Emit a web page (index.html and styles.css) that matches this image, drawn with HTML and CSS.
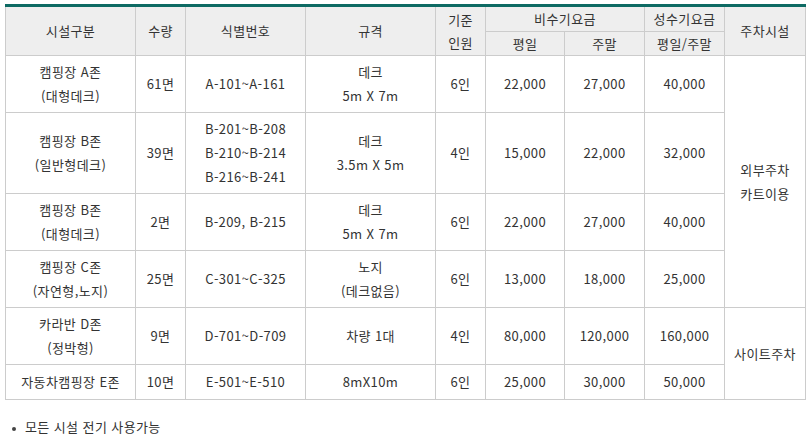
FILE: index.html
```html
<!DOCTYPE html>
<html lang="ko">
<head>
<meta charset="utf-8">
<link rel="stylesheet" href="styles.css">
</head>
<body>
<div class="wrap">
  <table class="fee">
    <colgroup>
      <col class="c1"><col class="c2"><col class="c3"><col class="c4"><col class="c5"><col class="c6"><col class="c7"><col class="c8"><col class="c9">
    </colgroup>
    <thead>
      <tr>
        <th rowspan="2">시설구분</th>
        <th rowspan="2">수량</th>
        <th rowspan="2">식별번호</th>
        <th rowspan="2">규격</th>
        <th rowspan="2">기준<br>인원</th>
        <th colspan="2">비수기요금</th>
        <th>성수기요금</th>
        <th rowspan="2">주차시설</th>
      </tr>
      <tr>
        <th>평일</th>
        <th>주말</th>
        <th>평일/주말</th>
      </tr>
    </thead>
    <tbody>
      <tr>
        <td>캠핑장 A존<br>(대형데크)</td>
        <td>61면</td>
        <td>A-101~A-161</td>
        <td>데크<br>5m X 7m</td>
        <td>6인</td>
        <td>22,000</td>
        <td>27,000</td>
        <td>40,000</td>
        <td rowspan="4">외부주차<br>카트이용</td>
      </tr>
      <tr>
        <td>캠핑장 B존<br>(일반형데크)</td>
        <td>39면</td>
        <td>B-201~B-208<br>B-210~B-214<br>B-216~B-241</td>
        <td>데크<br>3.5m X 5m</td>
        <td>4인</td>
        <td>15,000</td>
        <td>22,000</td>
        <td>32,000</td>
      </tr>
      <tr>
        <td>캠핑장 B존<br>(대형데크)</td>
        <td>2면</td>
        <td>B-209, B-215</td>
        <td>데크<br>5m X 7m</td>
        <td>6인</td>
        <td>22,000</td>
        <td>27,000</td>
        <td>40,000</td>
      </tr>
      <tr>
        <td>캠핑장 C존<br>(자연형,노지)</td>
        <td>25면</td>
        <td>C-301~C-325</td>
        <td>노지<br>(데크없음)</td>
        <td>6인</td>
        <td>13,000</td>
        <td>18,000</td>
        <td>25,000</td>
      </tr>
      <tr>
        <td>카라반 D존<br>(정박형)</td>
        <td>9면</td>
        <td>D-701~D-709</td>
        <td>차량 1대</td>
        <td>4인</td>
        <td>80,000</td>
        <td>120,000</td>
        <td>160,000</td>
        <td rowspan="2">사이트주차</td>
      </tr>
      <tr class="last">
        <td>자동차캠핑장 E존</td>
        <td>10면</td>
        <td>E-501~E-510</td>
        <td>8mX10m</td>
        <td>6인</td>
        <td>25,000</td>
        <td>30,000</td>
        <td>50,000</td>
      </tr>
    </tbody>
  </table>
  <ul class="notes">
    <li>모든 시설 전기 사용가능</li>
  </ul>
</div>
</body>
</html>
```
FILE: styles.css
```css
html, body {
  margin: 0;
  padding: 0;
  background: #fff;
}
body {
  font-family: "Noto Sans CJK KR", "Noto Sans", "Liberation Sans", sans-serif;
  font-size: 13px;
  letter-spacing: 0.4px;
  color: #333;
}
.wrap {
  padding: 4px 7px 0 5px;
}
.fee {
  width: 800px;
  table-layout: fixed;
  border-collapse: collapse;
  border-top: 3px solid #0d6a63;
}
.c1 { width: 130px; }
.c2 { width: 50px; }
.c3 { width: 120px; }
.c4 { width: 130px; }
.c5 { width: 50px; }
.c6 { width: 79px; }
.c7 { width: 80px; }
.c8 { width: 80px; }
.c9 { width: 81px; }
.fee th,
.fee td {
  border: 1px solid #cccccc;
  text-align: center;
  vertical-align: middle;
  font-weight: normal;
  padding: 0;
}
.fee thead tr:first-child th {
  border-top: none;
}
.fee th {
  background: #eeeeee;
  line-height: 23.5px;
  color: #333;
}
.fee td {
  line-height: 24px;
  padding: 4px 2px;
}
.fee tr.last td {
  height: 26px;
}
.notes {
  list-style: none;
  margin: 15px 0 0 0;
  padding: 0 0 0 5px;
}
.notes li {
  position: relative;
  padding-left: 15px;
  line-height: 24px;
}
.notes li::before {
  content: "";
  position: absolute;
  left: 2px;
  top: 12px;
  width: 4px;
  height: 4px;
  border-radius: 50%;
  background: #444;
}
```
